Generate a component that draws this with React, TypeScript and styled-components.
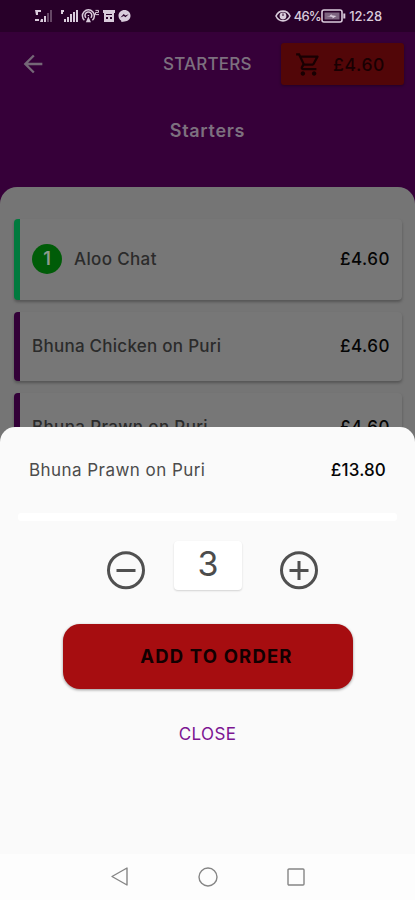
import React from 'react';
import styled, { createGlobalStyle } from 'styled-components';

const GlobalStyle = createGlobalStyle`
  * { box-sizing: border-box; }
  body { margin: 0; background: #fafafa; font-family: Inter, "Liberation Sans", sans-serif; }
  button { font: inherit; border: 0; padding: 0; background: none; }
`;

const Phone = styled.main`
  position: relative;
  width: 415px;
  height: 900px;
  overflow: hidden;
  background: #360039;
`;

const StatusBar = styled.div`
  display: flex;
  align-items: center;
  height: 32px;
  padding: 0 33px 0 34px;
  background: #280029;
  color: #d9cbdb;
`;

const StatusRight = styled.div`
  display: flex;
  align-items: center;
  margin-left: auto;
`;

const StatusText = styled.span<{ $spacing: number }>`
  font-size: 13px;
  line-height: 16px;
  font-weight: 500;
  letter-spacing: ${(p) => p.$spacing}px;
`;

const AppBar = styled.header`
  display: grid;
  grid-template-columns: 163px 118px 123px;
  align-items: center;
  height: 64px;
`;

const BackButton = styled.button`
  display: flex;
  padding-left: 19px;
  color: #756777;
`;

const BarTitle = styled.h1`
  margin: 0;
  font-size: 17px;
  line-height: 24px;
  font-weight: 500;
  letter-spacing: 0.2px;
  color: #7d707f;
  white-space: nowrap;
`;

const Basket = styled.button`
  display: flex;
  align-items: center;
  height: 42px;
  padding-left: 14px;
  border-radius: 3px;
  background: #520608;
  color: #180002;
  box-shadow: 0 1px 3px rgba(0, 0, 0, 0.35);
`;

const BasketTotal = styled.span`
  margin-left: 11px;
  font-size: 17.5px;
  font-weight: 500;
  letter-spacing: 0.6px;
`;

const Heading = styled.h2`
  margin: 0;
  height: 91px;
  padding-top: 22px;
  text-align: center;
  font-size: 18px;
  line-height: 25px;
  font-weight: 600;
  letter-spacing: 0.7px;
  color: #7d707f;
`;

const Menu = styled.section`
  display: flex;
  flex-direction: column;
  gap: 12px;
  height: 713px;
  padding: 32px 13px 0 14px;
  border-radius: 17px 17px 0 0;
  background: #757575;
`;

const Item = styled.article<{ $accent: string; $height: number }>`
  display: flex;
  align-items: center;
  flex: none;
  height: ${(p) => p.$height}px;
  padding: 0 12px 2px 12px;
  border-left: 6px solid ${(p) => p.$accent};
  border-radius: 4px;
  background: #777;
  box-shadow: 0 2px 3px rgba(0, 0, 0, 0.28);
`;

const Count = styled.span`
  display: grid;
  place-items: center;
  width: 30px;
  height: 30px;
  margin-right: 12px;
  border-radius: 50%;
  background: #005c08;
  color: #8d9b8d;
  font-size: 18px;
  font-weight: 600;
`;

const Name = styled.span<{ $spacing: number; $sheet?: boolean }>`
  font-size: 17px;
  line-height: 24px;
  font-weight: ${(p) => (p.$sheet ? 400 : 500)};
  letter-spacing: ${(p) => p.$spacing}px;
  color: ${(p) => (p.$sheet ? '#4c4c4c' : '#2b2b2b')};
  white-space: nowrap;
`;

const Price = styled.span<{ $spacing: number }>`
  margin-left: auto;
  font-size: 17px;
  line-height: 24px;
  font-weight: 500;
  letter-spacing: ${(p) => p.$spacing}px;
  color: #050505;
`;

const Sheet = styled.section`
  position: absolute;
  inset: 427px 0 0 0;
  display: flex;
  flex-direction: column;
  align-items: center;
  border-radius: 15px 15px 0 0;
  background: #fafafa;
`;

const SheetHeader = styled.div`
  display: flex;
  align-items: center;
  width: 100%;
  height: 86px;
  padding: 0 29px 0 29px;
`;

const Divider = styled.div`
  width: 379px;
  height: 8px;
  border-radius: 3px;
  background: #fff;
`;

const Stepper = styled.div`
  display: flex;
  align-items: flex-start;
  width: 100%;
  height: 103px;
  padding: 20px 96px 0 106px;
`;

const StepButton = styled.button`
  display: flex;
  margin-top: 9px;
  color: #505050;
`;

const Quantity = styled.output`
  display: block;
  width: 68px;
  height: 49px;
  margin: 0 37px 0 28px;
  border-radius: 4px;
  background: #fff;
  box-shadow: 0 1px 2px rgba(0, 0, 0, 0.16);
  text-align: center;
  font-size: 34px;
  line-height: 45px;
  color: #4c4c4c;
`;

const AddButton = styled.button`
  width: 290px;
  height: 65px;
  padding: 0 0 2px 18px;
  border-radius: 17px;
  background: #a60d10;
  box-shadow: 0 1px 3px rgba(0, 0, 0, 0.4);
  color: #120001;
  font-size: 18.5px;
  font-weight: 700;
  letter-spacing: 1.15px;
`;

const CloseButton = styled.button`
  margin-top: 32px;
  height: 26px;
  font-size: 17px;
  line-height: 26px;
  letter-spacing: 0.4px;
  color: #7c1592;
`;

const NavBar = styled.nav`
  display: flex;
  justify-content: center;
  align-items: center;
  gap: 66px;
  width: 100%;
  height: 46px;
  margin-top: auto;
  background: #fdfdfd;
  color: #858585;
`;

const Signals = () => (
  <svg width="98" height="16" viewBox="0 0 98 16" fill="currentColor">
    <path d="M1 2h6v2H4v3H2zM1 11h4v2H1zM7 11h2v3H6zM10 8h2v6h-2z" />
    <path d="M13 5h2v9h-2zM16 2h2v12h-2z" opacity=".35" />
    <path d="M27 2h3v2h-1v2h-2zM30 11h2v3h-2zM33 9h2v5h-2zM36 6h2v8h-2zM39 4h2v10h-2zM42 2h2v12h-2z" />
    <g fill="none" stroke="currentColor" strokeWidth="1.5">
      <path d="M50.4 12.3a6 6 0 1 1 8 0M52 9.800a3.400 3.400 0 1 1 4.800 0" />
      <path d="M54.400 7v1M53 13.600l1.400-3.200 1.400 3.200z" />
      <path d="M61.500 2.400h3v2h-3v2.200h3.500" strokeWidth="1" />
    </g>
    <path fillRule="evenodd" d="M69 2h12v3h-1v9H70V5h-1zm3 4v1h6V6zm0 3v2h2V9zm4 0v2h2V9z" />
    <path fillRule="evenodd" d="M90.500 2c3.500 0 6 2.500 6 5.700s-2.500 5.700-6 5.700l-3 .6-.4-1.500c-1.600-1-2.600-2.800-2.600-4.800C84.500 4.500 87 2 90.500 2zm-4 7.500 3.300-1.600 1.700 1.300 3.200-3-3.300 1.200-1.700-1.300z" />
  </svg>
);

const EyeIcon = () => (
  <svg width="16" height="12" viewBox="0 0 16 12" fill="none" stroke="currentColor" strokeWidth="1.600">
    <path d="M1 6c3-6.500 11-6.500 14 0-3 6.500-11 6.500-14 0z" />
    <circle cx="8" cy="6" r="2.600" fill="currentColor" />
    <path d="M8 3.500v2.500" stroke="#280029" strokeWidth="1" />
  </svg>
);

const BatteryIcon = () => (
  <svg width="25" height="14" viewBox="0 0 25 14" fill="none" stroke="currentColor">
    <rect x="1" y="1" width="20" height="12" rx="2" strokeWidth="1.600" />
    <rect x="3.500" y="3.500" width="15" height="7" fill="#7d6580" stroke="none" />
    <path d="M5.500 7h3l2-2v1.300l5 .7-4 2.500V8z" fill="currentColor" stroke="none" />
    <path d="M23.300 4.500v5" strokeWidth="2" />
  </svg>
);

const MaterialIcon = ({ size, d }: { size: number; d: string }) => (
  <svg width={size} height={size} viewBox="0 0 24 24" fill="currentColor"><path d={d} /></svg>
);

const StepIcon = ({ plus }: { plus?: boolean }) => (
  <svg width="40" height="40" viewBox="0 0 40 40" fill="none" stroke="currentColor" strokeWidth="3">
    <circle cx="20" cy="20.300" r="17.500" />
    <path d={plus ? 'M10.500 20.500h19M20 11v19' : 'M10.500 20.500h19'} />
  </svg>
);

const CART = 'M15.550 13c.75 0 1.410-.41 1.750-1.030l3.580-6.490A.996.996 0 0 0 20.010 4H5.210l-.94-2H1v2h2l3.600 7.590-1.350 2.440C4.520 15.370 5.480 17 7 17h12v-2H7l1.100-2h7.450zM6.160 6h12.150l-2.760 5H8.530L6.160 6zM7 18c-1.100 0-1.990.9-1.990 2S5.900 22 7 22s2-.9 2-2-.9-2-2-2zm10 0c-1.100 0-1.990.9-1.990 2s.89 2 1.990 2 2-.9 2-2-.9-2-2-2z';
const BACK = 'M20 11H7.830l5.590-5.590L12 4l-8 8 8 8 1.410-1.410L7.830 13H20v-2z';

const items = [
  { name: 'Aloo Chat', price: '£4.60', count: 1, accent: '#007a3e', height: 81, spacing: 0.36 },
  { name: 'Bhuna Chicken on Puri', price: '£4.60', accent: '#330038', height: 69, spacing: 0.26 },
  { name: 'Bhuna Prawn on Puri', price: '£4.60', accent: '#330038', height: 69, spacing: 0.36 },
];

export default function App() {
  return (
    <Phone>
      <GlobalStyle />
      <StatusBar>
        <Signals />
        <StatusRight>
          <EyeIcon />
          <StatusText $spacing={-0.8}>&nbsp;46%</StatusText>
          <BatteryIcon />
          <StatusText $spacing={-0.15}>&nbsp;12:28</StatusText>
        </StatusRight>
      </StatusBar>
      <AppBar>
        <BackButton aria-label="Back"><MaterialIcon size={28} d={BACK} /></BackButton>
        <BarTitle>STARTERS</BarTitle>
        <Basket>
          <MaterialIcon size={27} d={CART} />
          <BasketTotal>£4.60</BasketTotal>
        </Basket>
      </AppBar>
      <Heading>Starters</Heading>
      <Menu>
        {items.map((item) => (
          <Item key={item.name} $accent={item.accent} $height={item.height}>
            {item.count && <Count>{item.count}</Count>}
            <Name $spacing={item.spacing}>{item.name}</Name>
            <Price $spacing={0.5}>{item.price}</Price>
          </Item>
        ))}
      </Menu>
      <Sheet>
        <SheetHeader>
          <Name $spacing={0.45} $sheet>Bhuna Prawn on Puri</Name>
          <Price $spacing={0.15}>£13.80</Price>
        </SheetHeader>
        <Divider />
        <Stepper>
          <StepButton aria-label="Decrease"><StepIcon /></StepButton>
          <Quantity>3</Quantity>
          <StepButton aria-label="Increase"><StepIcon plus /></StepButton>
        </Stepper>
        <AddButton>ADD TO ORDER</AddButton>
        <CloseButton>CLOSE</CloseButton>
        <NavBar>
          <svg width="22" height="22" viewBox="0 0 22 22" fill="none" stroke="currentColor" strokeWidth="1.400" strokeLinejoin="round"><path d="M18 2v17L3 10.500z" /></svg>
          <svg width="22" height="22" viewBox="0 0 22 22" fill="none" stroke="currentColor" strokeWidth="1.400"><circle cx="11" cy="11" r="9" /></svg>
          <svg width="22" height="22" viewBox="0 0 22 22" fill="none" stroke="currentColor" strokeWidth="1.400"><rect x="3" y="3" width="16" height="16" rx="1" /></svg>
        </NavBar>
      </Sheet>
    </Phone>
  );
}
